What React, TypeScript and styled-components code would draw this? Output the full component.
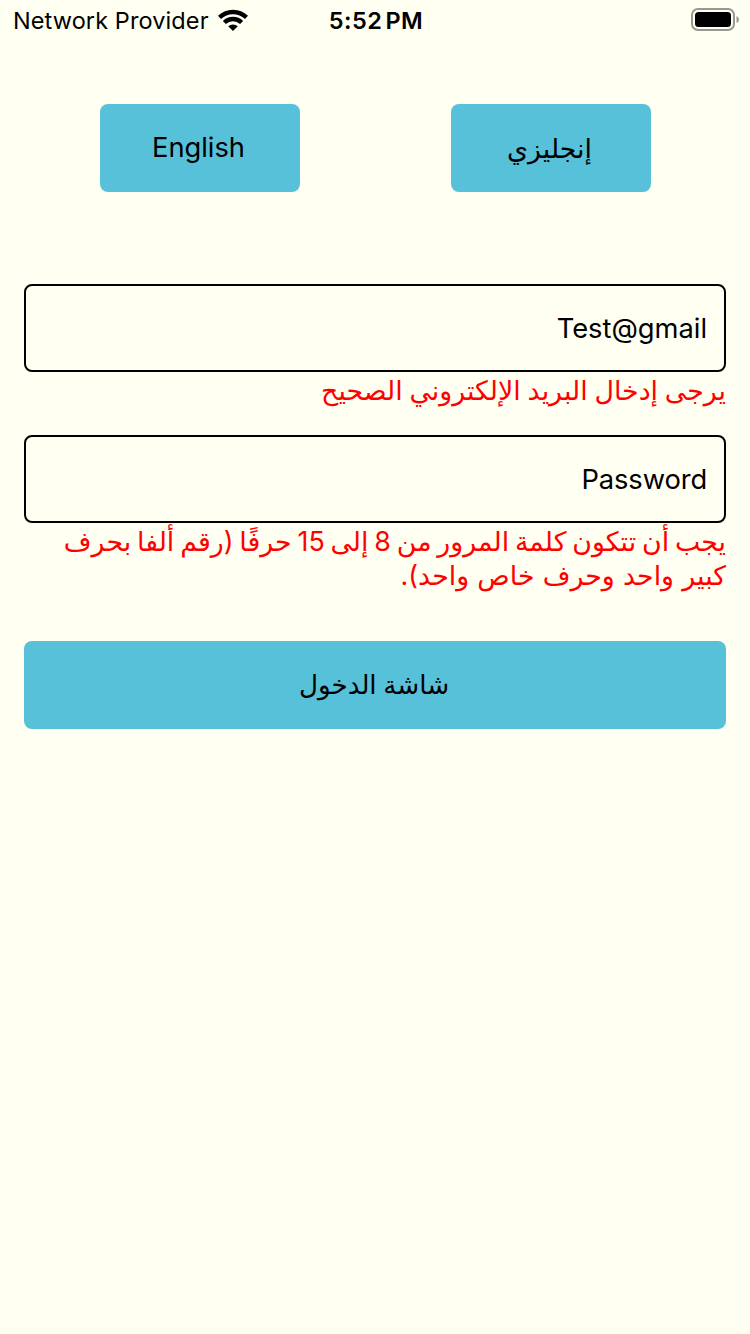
import React from "react";
import styled, { createGlobalStyle } from "styled-components";

const Global = createGlobalStyle`
  body { margin: 0; background: #fffff2; }
  * { box-sizing: border-box; }
`;
const Screen = styled.main`
  width: 750px; height: 1334px; background: #fffff2; color: #000;
  font-family: Inter, "DejaVu Sans", sans-serif; font-size: 28px;
  overflow: hidden;
`;
const StatusBar = styled.header`
  height: 40px; display: grid; grid-template-columns: 1fr auto 1fr;
  align-items: center; padding: 0 11px 0 13px;
`;
const Carrier = styled.div`
  display: flex; align-items: center; gap: 9px; white-space: nowrap;
  font-size: 23.5px; letter-spacing: 0.1px; line-height: 42px;
`;
const WifiIcon = styled.svg`margin-bottom: 2px;`;
const Clock = styled.div`
  font-size: 23.5px; font-weight: 600; line-height: 42px; letter-spacing: 0.5px; word-spacing: -3.5px;
`;
const Battery = styled.div`display: flex; justify-content: flex-end; padding-bottom: 2px;`;
const Languages = styled.div`display: flex; justify-content: space-around; padding: 64px 24px 0;`;
const Button = styled.button<{ $wide?: boolean }>`
  width: ${p => (p.$wide ? "702px" : "200px")}; height: 88px; border: 0; border-radius: 8px;
  background: #57c1da; color: #000; font: inherit; padding: 0 2px 1px 0;
  display: flex; align-items: center; justify-content: center;
`;
const Form = styled.div`padding: 92px 24px 0; display: flex; flex-direction: column;`;
const Field = styled.div`
  height: 88px; border: 2px solid #000; border-radius: 8px; padding: 0 17px;
  display: flex; align-items: center; justify-content: flex-end;
`;
const ErrorText = styled.p<{ $height: number }>`
  margin: 0; height: ${p => p.$height}px; color: #f00; line-height: 34px; padding-top: 1px;
`;
const Latin = styled.span<{ $tracking?: number }>`
  font-size: 27.3px; font-weight: 370; letter-spacing: ${p => p.$tracking ?? 0}px; white-space: nowrap;
`;
const Arabic = styled.span.attrs({ dir: "rtl", lang: "ar" })<{ $gap?: number; $size?: number }>`
  font-size: ${p => p.$size ?? 26.8}px; word-spacing: ${p => p.$gap ?? 0}px; white-space: nowrap;
`;

export default function App() {
  return (
    <Screen>
      <Global />
      <StatusBar>
        <Carrier>
          <span>Network Provider</span>
          <WifiIcon width="30" height="22" viewBox="0 0 30 22">
            <g fill="none" stroke="#000" strokeWidth="4.400">
              <path d="M1.500 8.400a19.500 19.500 0 0 1 27 0" />
              <path d="M6.400 13.500a12.400 12.400 0 0 1 17.200 0" />
            </g>
            <path d="M15 22l-4.800-4.800a7.300 7.300 0 0 1 9.600 0z" />
          </WifiIcon>
        </Carrier>
        <Clock>5:52 PM</Clock>
        <Battery>
          <svg width="48" height="24" viewBox="0 0 48 24">
            <rect x="1" y="1" width="42" height="21" rx="6" fill="none" stroke="#999992" strokeWidth="2" />
            <rect x="4" y="4" width="36" height="15" rx="3.5" />
            <path d="M45.500 8v7q2.500-1 2.500-3.500t-2.500-3.500" fill="#999992" />
          </svg>
        </Battery>
      </StatusBar>
      <Languages>
        <Button><Latin>English</Latin></Button>
        <Button><Arabic>إنجليزي</Arabic></Button>
      </Languages>
      <Form>
        <Field><Latin>Test@gmail</Latin></Field>
        <ErrorText $height={63} dir="rtl"><Arabic $gap={-0.7}>يرجى إدخال البريد الإلكتروني الصحيح</Arabic></ErrorText>
        <Field><Latin $tracking={-0.1}>Password</Latin></Field>
        <ErrorText $height={118} dir="rtl">
          <Arabic $gap={-1.7}>يجب أن تتكون كلمة المرور من 8 إلى 15 حرفًا (رقم ألفا بحرف</Arabic><br />
          <Arabic $gap={0.7}>كبير واحد وحرف خاص واحد).</Arabic>
        </ErrorText>
        <Button $wide><Arabic $size={26.2} $gap={-0.8}>شاشة الدخول</Arabic></Button>
      </Form>
    </Screen>
  );
}
